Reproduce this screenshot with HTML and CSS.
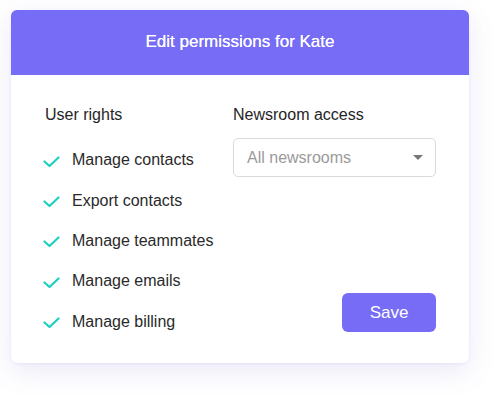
FILE: index.html
```html
<!DOCTYPE html>
<html>
<head>
<meta charset="utf-8">
<link rel="stylesheet" href="styles.css">
</head>
<body>
<div class="card">
  <div class="card-header">Edit permissions for Kate</div>
  <div class="card-body">
    <div class="col-left">
      <div class="heading">User rights</div>
      <ul class="rights">
        <li><svg class="check" width="17" height="12" viewBox="0 0 17 12"><path d="M1.5 5.5 L6.5 10 L15.5 1.5" fill="none" stroke="#1ccfc0" stroke-width="2.2" stroke-linecap="round" stroke-linejoin="round"/></svg><span>Manage contacts</span></li>
        <li><svg class="check" width="17" height="12" viewBox="0 0 17 12"><path d="M1.5 5.5 L6.5 10 L15.5 1.5" fill="none" stroke="#1ccfc0" stroke-width="2.2" stroke-linecap="round" stroke-linejoin="round"/></svg><span>Export contacts</span></li>
        <li><svg class="check" width="17" height="12" viewBox="0 0 17 12"><path d="M1.5 5.5 L6.5 10 L15.5 1.5" fill="none" stroke="#1ccfc0" stroke-width="2.2" stroke-linecap="round" stroke-linejoin="round"/></svg><span>Manage teammates</span></li>
        <li><svg class="check" width="17" height="12" viewBox="0 0 17 12"><path d="M1.5 5.5 L6.5 10 L15.5 1.5" fill="none" stroke="#1ccfc0" stroke-width="2.2" stroke-linecap="round" stroke-linejoin="round"/></svg><span>Manage emails</span></li>
        <li><svg class="check" width="17" height="12" viewBox="0 0 17 12"><path d="M1.5 5.5 L6.5 10 L15.5 1.5" fill="none" stroke="#1ccfc0" stroke-width="2.2" stroke-linecap="round" stroke-linejoin="round"/></svg><span>Manage billing</span></li>
      </ul>
    </div>
    <div class="col-right">
      <div class="heading">Newsroom access</div>
      <div class="select">
        <span>All newsrooms</span>
        <span class="caret"></span>
      </div>
      <button class="save">Save</button>
    </div>
  </div>
</div>
</body>
</html>
```

FILE: styles.css
```css
* { box-sizing: border-box; }
html, body { margin: 0; padding: 0; background: #ffffff; }
body {
  width: 500px;
  height: 395px;
  font-family: "Liberation Sans", Arial, sans-serif;
  color: #252525;
  padding: 10px 0 0 11px;
}
.card {
  width: 458px;
  height: 353px;
  background: #fff;
  border-radius: 6px;
  box-shadow: 0 8px 28px rgba(90, 80, 190, 0.13), 0 1px 3px rgba(90, 80, 190, 0.08);
  overflow: hidden;
  display: flex;
  flex-direction: column;
}
.card-header {
  flex: none;
  height: 65px;
  background: #766cf5;
  color: #fff;
  font-size: 17px;
  display: flex;
  align-items: center;
  justify-content: center;
  padding-bottom: 1px;
  text-shadow: 0 0 0.4px #fff;
}
.card-body {
  flex: 1;
  display: grid;
  grid-template-columns: 188px 1fr;
  padding: 30px 33px 20px 34px;
}
.heading {
  font-size: 16px;
  line-height: 20px;
  height: 20px;
}
.rights {
  list-style: none;
  margin: 15px 0 0 0;
  padding: 0;
}
.rights li {
  height: 40.4px;
  display: flex;
  align-items: center;
  font-size: 16px;
  color: #2a2a2a;
}
.check {
  margin-left: -2px;
  margin-right: 12px;
  margin-top: 3px;
  flex: none;
}
.col-right {
  display: flex;
  flex-direction: column;
}
.select {
  margin-top: 13px;
  height: 39px;
  border: 1px solid #dadada;
  border-radius: 5px;
  display: flex;
  align-items: center;
  justify-content: space-between;
  padding: 0 12px 0 13px;
  font-size: 16px;
  color: #9a9a9a;
}
.caret {
  width: 0;
  height: 0;
  border-left: 5px solid transparent;
  border-right: 5px solid transparent;
  border-top: 5px solid #777;
}
.save {
  margin-top: auto;
  margin-bottom: 11px;
  align-self: flex-end;
  width: 94px;
  height: 39px;
  border: none;
  border-radius: 6px;
  background: #766cf5;
  color: #fff;
  font-family: "Liberation Sans", Arial, sans-serif;
  font-size: 17px;
  padding: 0;
}
```
